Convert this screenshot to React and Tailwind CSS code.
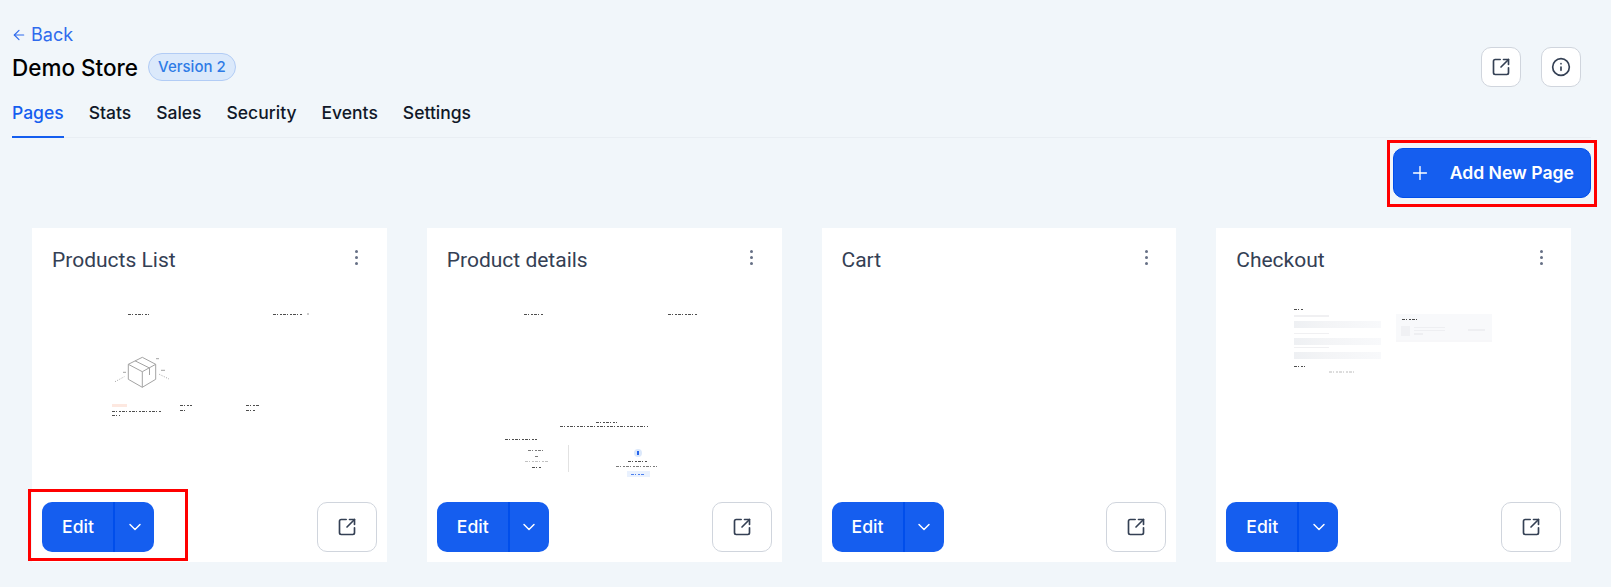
import React from 'react';
import { ArrowLeft, ChevronDown, Info, Plus, SquareArrowOutUpRight } from 'lucide-react';

const tabs = ['Pages', 'Stats', 'Sales', 'Security', 'Events', 'Settings'];

// tiny unreadable text in the page previews
function Txt({ x1, x2, y, c = '#222', w = 1, o = 0.8 }) {
  return <line x1={x1} x2={x2} y1={y} y2={y} stroke={c} strokeWidth={w} strokeDasharray="3 1 1 2 2 1" opacity={o} />;
}

function ProductsThumb() {
  return (
    <>
      <Txt x1={96} x2={117} y={14.5} />
      <Txt x1={241} x2={271} y={14.5} />
      <rect x={275} y={13} width={2} height={2} fill="#ccc" />
      <g fill="none" stroke="#a3a3a3" strokeWidth="1">
        <path d="M110.3 57.3 L123.7 64.3 L123.7 79.3 L110.3 87.3 L96.3 79.3 L96.3 64.3 Z" />
        <path d="M96.3 64.3 L110.3 71.7 L123.7 64.3 M110.3 71.7 V87.3" />
        <path d="M103 60.8 L117.5 68 M117.5 68 V75" />
        <path d="M83 81.7 L92.3 76.7 M127.3 74.3 L137 79" strokeDasharray="1 1.5" />
        <path d="M91 72.3 H94 M129 70.3 H133 M124 58.7 H127" />
      </g>
      <rect x={80} y={104} width={15} height={3} fill="#fde8e0" />
      <Txt x1={80} x2={129} y={111.5} />
      <Txt x1={80} x2={88} y={115.5} />
      <Txt x1={148} x2={160} y={105.5} />
      <Txt x1={148} x2={155} y={110.5} />
      <Txt x1={214} x2={228} y={105.5} />
      <Txt x1={214} x2={223} y={110.5} />
    </>
  );
}

function DetailsThumb() {
  return (
    <>
      <Txt x1={97} x2={116} y={14.5} />
      <Txt x1={241} x2={270} y={14.5} />
      <Txt x1={169} x2={190} y={122.5} />
      <Txt x1={133} x2={221} y={126.5} />
      <Txt x1={78} x2={110} y={139.5} />
      <Txt x1={101} x2={118} y={150.5} o={0.6} />
      <Txt x1={108} x2={112} y={156.5} o={0.6} />
      <Txt x1={98} x2={121} y={161.5} c="#999" o={0.6} />
      <Txt x1={105} x2={115} y={167.5} />
      <line x1={141.5} x2={141.5} y1={145} y2={172} stroke="#e2e2e2" />
      <circle cx={211} cy={153} r={4} fill="#dbe8fb" />
      <rect x={210} y={151} width={2} height={4} fill="#2563eb" />
      <Txt x1={201} x2={221} y={161.5} />
      <Txt x1={189} x2={230} y={166.5} o={0.6} />
      <rect x={200} y={171} width={23} height={6} fill="#e9f1fe" />
      <Txt x1={204} x2={218} y={174.5} c="#2563eb" />
    </>
  );
}

function CheckoutThumb() {
  return (
    <>
      <defs>
        <linearGradient id="skel">
          <stop offset="0" stopColor="#eef0f3" />
          <stop offset="0.35" stopColor="#f3f4f6" />
          <stop offset="1" stopColor="#f8f9fb" />
        </linearGradient>
      </defs>
      <Txt x1={78} x2={88} y={9.5} />
      <rect x={78} y={15} width={35} height={2} fill="#f0f0f2" />
      <rect x={78} y={21} width={87} height={7} fill="url(#skel)" />
      <rect x={78} y={33} width={35} height={1} fill="#f0f0f2" />
      <rect x={78} y={38} width={87} height={7} fill="url(#skel)" />
      <rect x={78} y={47} width={35} height={1} fill="#f0f0f2" />
      <rect x={78} y={52} width={87} height={7} fill="url(#skel)" />
      <Txt x1={78} x2={89} y={66.5} />
      <Txt x1={113} x2={140} y={72} c="#aaa" />
      <rect x={180} y={15} width={96} height={27} fill="#f1f2f5" opacity="0.6" />
      <rect x={180} y={14} width={96} height={26} fill="#f8f9fb" />
      <Txt x1={186} x2={201} y={19.5} />
      <rect x={185} y={26} width={9} height={10} fill="#f0f1f4" />
      <rect x={198} y={27} width={31} height={1} fill="#eeeff2" />
      <rect x={198} y={30} width={31} height={1} fill="#eeeff2" />
      <rect x={198} y={33} width={9} height={2} fill="#eeeff2" />
      <rect x={252} y={29} width={17} height={2} fill="#eeeff2" />
    </>
  );
}

const pages = [
  { name: 'Products List', thumb: <ProductsThumb />, marked: true },
  { name: 'Product details', thumb: <DetailsThumb /> },
  { name: 'Cart', thumb: null },
  { name: 'Checkout', thumb: <CheckoutThumb /> },
];

function PageCard({ page }) {
  return (
    <div className="relative bg-white h-[334px] flex flex-col">
      <div className="flex justify-between pt-[20px] pl-5 pr-[20px] h-[72px]">
        <h3 className="text-[21px] leading-[24px] text-[#344054] font-normal" style={{ fontFamily: 'Roboto, sans-serif' }}>{page.name}</h3>
        <div className="flex flex-col gap-[3px] items-center w-[20px] pt-[2px]">
          <span className="w-[3px] h-[3px] rounded-full bg-[#667085]"></span>
          <span className="w-[3px] h-[3px] rounded-full bg-[#667085]"></span>
          <span className="w-[3px] h-[3px] rounded-full bg-[#667085]"></span>
        </div>
      </div>
      <svg width="355" height="195" viewBox="0 0 355 195" className="block">{page.thumb}</svg>
      <div className="flex items-center justify-between px-[10px] mt-[7px]">
        <div className="flex h-[50px] w-[112px] rounded-[10px] overflow-hidden bg-[#155eef] text-white">
          <button className="w-[73px] pl-[1px] border-r-2 border-[#004eeb] text-[17.6px] font-medium">Edit</button>
          <button className="flex-1 flex items-center justify-center"><ChevronDown className="w-5 h-5" strokeWidth={1.75} /></button>
        </div>
        <button className="w-[60px] h-[50px] rounded-[10px] bg-white border border-[#d0d5dd] flex items-center justify-center text-[#344054]">
          <SquareArrowOutUpRight className="w-5 h-5" strokeWidth={2} />
        </button>
      </div>
      {page.marked && <div className="absolute left-[-4px] top-[261px] w-[160px] h-[72px] border-[3px] border-[#ff0000]"></div>}
    </div>
  );
}

export default function App() {
  return (
    <div className="min-h-[587px] bg-[#f1f6fa] pl-3 pr-5 pt-6 text-[#101828]" style={{ fontFamily: 'Inter, sans-serif' }}>
      <div className="flex justify-between">
        <div>
          <a className="flex items-center gap-[4px] text-[#2f6bed] text-[18px] leading-5 h-5 mt-[1px]">
            <ArrowLeft className="w-4 h-4 ml-[-1px]" strokeWidth={1.75} /> Back
          </a>
          <div className="flex items-center gap-[10px] mt-[7px] h-[32px]">
            <h1 className="text-[22.5px] leading-8 font-medium text-black">Demo Store</h1>
            <span className="h-[28px] px-[9px] flex items-center rounded-full bg-[#dbe9fb] border border-[#b2ccf5] text-[15px] font-medium text-[#2e7be6] mb-[2px]">Version 2</span>
          </div>
        </div>
        <div className="flex gap-[20px] pt-[23px] pr-[10px]">
          <button className="w-10 h-10 rounded-[10px] bg-white border border-[#d0d5dd] flex items-center justify-center text-[#344054]">
            <SquareArrowOutUpRight className="w-5 h-5" strokeWidth={2} />
          </button>
          <button className="w-10 h-10 rounded-[10px] bg-white border border-[#d0d5dd] flex items-center justify-center text-[#344054]">
            <Info className="w-5 h-5" strokeWidth={2} />
          </button>
        </div>
      </div>

      <nav className="flex gap-[25px] h-[52px] items-stretch border-b border-[#e9eef3] mt-[-1px]">
        {tabs.map((t, i) => (
          <span key={t} className={i === 0
            ? 'flex items-center pt-[5px] text-[17.5px] font-medium text-[#155eef] border-b-2 border-[#155eef] mb-[-1px]'
            : 'flex items-center pt-[5px] text-[17.5px] font-medium text-[#101828] mb-[-1px] border-b-2 border-transparent'}>{t}</span>
        ))}
      </nav>

      <div className="flex justify-end mt-[10px]">
        <div className="relative">
          <button className="w-[198px] h-[50px] rounded-[10px] bg-[#155eef] border border-[#004eeb] text-white text-[17.6px] font-semibold flex items-center justify-between pl-[15px] pr-[16px]">
            <Plus className="w-[22px] h-[22px]" strokeWidth={1.5} />
            Add New Page
          </button>
          <div className="absolute left-[-6px] top-[-8px] w-[210px] h-[67px] border-[3px] border-[#ff0000]"></div>
        </div>
      </div>

      <div className="grid grid-cols-4 gap-10 mx-5 mt-[30px]">
        {pages.map((p) => <PageCard key={p.name} page={p} />)}
      </div>
    </div>
  );
}
